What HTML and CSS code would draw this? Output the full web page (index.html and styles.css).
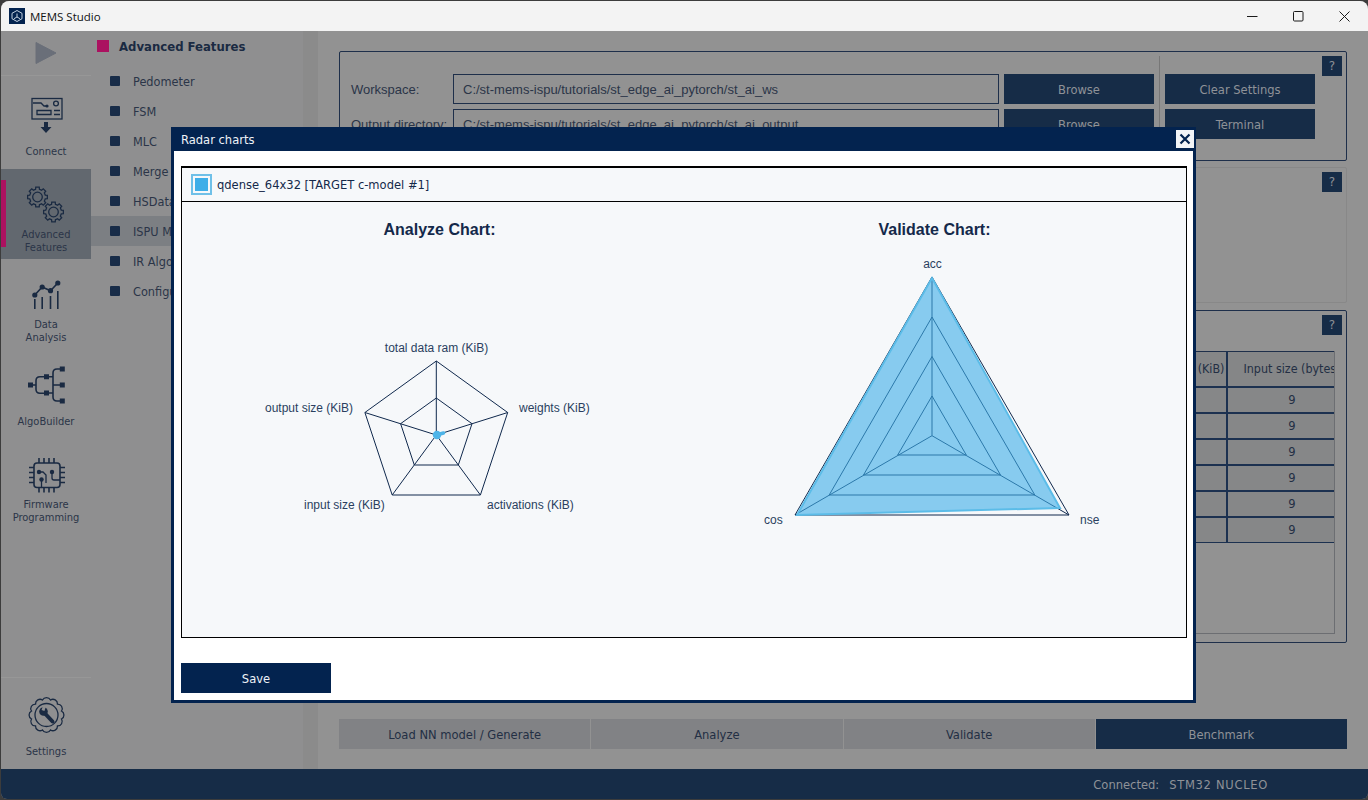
FILE: index.html
```html
<!DOCTYPE html>
<html lang="en">
<head>
  <meta charset="UTF-8">
  <title>MEMS Studio</title>
  <link rel="stylesheet" href="styles.css">
</head>
<body>
  <svg class="defs" width="0" height="0">
    <defs>
      <polygon id="cog" points="-1.94,-7.76 -1.74,-9.85 1.74,-9.85 1.94,-7.76 4.11,-6.86 5.73,-8.19 8.19,-5.73 6.86,-4.11 7.76,-1.94 9.85,-1.74 9.85,1.74 7.76,1.94 6.86,4.11 8.19,5.73 5.73,8.19 4.11,6.86 1.94,7.76 1.74,9.85 -1.74,9.85 -1.94,7.76 -4.11,6.86 -5.73,8.19 -8.19,5.73 -6.86,4.11 -7.76,1.94 -9.85,1.74 -9.85,-1.74 -7.76,-1.94 -6.86,-4.11 -8.19,-5.73 -5.73,-8.19 -4.11,-6.86"/>
    </defs>
  </svg>

  <div class="window">
    <!-- Title bar -->
    <div class="titlebar">
      <svg class="app-icon" viewBox="0 0 16 16" width="16" height="16">
        <rect width="16" height="16" fill="#03234f"/>
        <path d="M8 2.500l5 2.800v5.400l-5 2.800-5-2.800V5.300z M8 5.500v3.500l-3 1.700 M8 9l3 1.700" fill="none" stroke="#d8e4f0" stroke-width="0.9"/>
      </svg>
      <span class="app-title">MEMS Studio</span>
      <div class="win-controls">
        <svg viewBox="0 0 11 11" width="11" height="11"><path d="M0 5.500h10.500" stroke="#1a1a1a" fill="none"/></svg>
        <svg viewBox="0 0 11 11" width="11" height="11"><rect x="0.500" y="0.500" width="9.500" height="9.500" rx="1" stroke="#1a1a1a" fill="none"/></svg>
        <svg viewBox="0 0 11 11" width="11" height="11"><path d="M0.500 0.500l10 10M10.500 0.500l-10 10" stroke="#1a1a1a" fill="none"/></svg>
      </div>
    </div>

    <div class="app">
      <!-- Main navigation -->
      <nav class="nav">
        <div class="nav-play">
          <svg viewBox="0 0 22 24" width="22" height="24"><path d="M1 1.500L21 12 1 22.500z" fill="#6a6f79" stroke="#6a6f79" stroke-linejoin="round"/></svg>
        </div>
        <div class="nav-item first">
          <svg class="nav-icon" viewBox="0 0 40 40">
            <rect x="6" y="3.500" width="30" height="20.500"/>
            <path d="M7 8h8l3 3h3 M11 15.500h14v4H11z M28 15.500h6 M28 19.500h6"/>
            <circle cx="30" cy="8.500" r="2.400"/>
            <circle class="solid" cx="21" cy="11" r="1.600"/>
            <path class="solid" d="M18 27h4v5h3.500L20 38l-5.500-6H18z"/>
          </svg>
          <span class="nav-label">Connect</span>
        </div>
        <div class="nav-item active">
          <span class="nav-mark"></span>
          <svg class="nav-icon" viewBox="0 0 40 40">
            <g transform="translate(11.500 12)"><use href="#cog"/><circle r="4.800"/></g>
            <g transform="translate(27.500 27)"><use href="#cog"/><circle r="4.800"/></g>
          </svg>
          <span class="nav-label">Advanced<br>Features</span>
        </div>
        <div class="nav-item">
          <svg class="nav-icon" viewBox="0 0 40 40">
            <path class="thick" d="M8.800 34V24 M16.200 34V22 M24.500 34V21 M31.800 34V16"/>
            <path class="thick" d="M8.800 20l7.400-8 8.300 3.700L31.800 8"/>
            <circle class="solid" cx="8.800" cy="20" r="2.600"/>
            <circle class="solid" cx="16.200" cy="12" r="2.600"/>
            <circle class="solid" cx="24.500" cy="15.700" r="2.600"/>
            <circle class="solid" cx="31.800" cy="8" r="2.600"/>
          </svg>
          <span class="nav-label">Data<br>Analysis</span>
        </div>
        <div class="nav-item">
          <svg class="nav-icon" viewBox="0 0 40 40">
            <path class="thick" d="M5 20h5 M20.500 11.700H14q-4 0-4 4v8.600q0 4 4 4h6.500 M20.500 11.700h6.500 M20.500 28h6.500 M36 4h-5q-4 0-4 4v24q0 4 4 4h5 M27 20h9"/>
            <path class="solid" d="M2 17.500h5v5H2z M18 9.200h5v5h-5z M18 25.500h5v5h-5z M33.800 1.500h5v5h-5z M33.800 17.500h5v5h-5z M33.800 33.500h5v5h-5z"/>
          </svg>
          <span class="nav-label">AlgoBuilder</span>
        </div>
        <div class="nav-item">
          <svg class="nav-icon" viewBox="0 0 40 40">
            <rect class="thick" x="8" y="8" width="26" height="24.500" rx="3"/>
            <path class="thick" d="M13 3v5 M18 3v5 M23 3v5 M28 3v5 M13 32.500v5 M18 32.500v5 M23 32.500v5 M28 32.500v5 M3 12.500h5 M3 17.500h5 M3 22.500h5 M3 27.500h5 M34 12.500h5 M34 17.500h5 M34 22.500h5 M34 27.500h5"/>
            <path d="M13 17h4l3 3v8 M26 17v6q0 2 2 2h6 M15.500 24.500v8"/>
            <circle class="solid" cx="13" cy="17" r="2.200"/>
            <circle class="solid" cx="26" cy="17" r="2.200"/>
            <circle class="solid" cx="15.500" cy="24.500" r="2.200"/>
          </svg>
          <span class="nav-label">Firmware<br>Programming</span>
        </div>
        <div class="nav-item settings">
          <svg class="nav-icon" viewBox="0 0 40 40">
            <g transform="translate(20.500 20)">
              <path d="M-4.010-14.970A4.500 4.500 0 0 1 4.010-14.970A4.500 4.500 0 0 1 10.960-10.960A4.500 4.500 0 0 1 14.970-4.010A4.500 4.500 0 0 1 14.970 4.010A4.500 4.500 0 0 1 10.960 10.960A4.500 4.500 0 0 1 4.010 14.970A4.500 4.500 0 0 1-4.010 14.970A4.500 4.500 0 0 1-10.960 10.960A4.500 4.500 0 0 1-14.970 4.010A4.500 4.500 0 0 1-14.970-4.010A4.500 4.500 0 0 1-10.960-10.960A4.500 4.500 0 0 1-4.010-14.970z"/>
              <circle r="11.500"/>
              <path class="wrench" d="M-2 -2L6 6.500"/>
              <circle class="solid" cx="-3" cy="-3.500" r="4.300"/>
              <path class="notch" d="M-3.500 -4.500L-2 -9"/>
            </g>
          </svg>
          <span class="nav-label">Settings</span>
        </div>
      </nav>

      <!-- Sub menu -->
      <aside class="submenu">
        <h2 class="submenu-title"><span class="title-mark"></span>Advanced Features</h2>
        <ul class="submenu-list">
          <li><span class="dot"></span>Pedometer</li>
          <li><span class="dot"></span>FSM</li>
          <li><span class="dot"></span>MLC</li>
          <li><span class="dot"></span>Merge Projects</li>
          <li><span class="dot"></span>HSDatalog</li>
          <li class="selected"><span class="dot"></span>ISPU Model Zoo</li>
          <li><span class="dot"></span>IR Algorithms</li>
          <li><span class="dot"></span>Configuration</li>
        </ul>
      </aside>
      <div class="strip"></div>

      <!-- Main content -->
      <main class="main">
        <section class="panel panel-paths">
          <a class="help">?</a>
          <div class="paths">
            <div class="path-row">
              <label>Workspace:</label>
              <div class="path-input">C:/st-mems-ispu/tutorials/st_edge_ai_pytorch/st_ai_ws</div>
              <button class="btn">Browse</button>
            </div>
            <div class="path-row">
              <label>Output directory:</label>
              <div class="path-input">C:/st-mems-ispu/tutorials/st_edge_ai_pytorch/st_ai_output</div>
              <button class="btn">Browse</button>
            </div>
          </div>
          <div class="actions">
            <button class="btn">Clear Settings</button>
            <button class="btn">Terminal</button>
          </div>
        </section>

        <section class="panel panel-empty">
          <a class="help">?</a>
        </section>

        <section class="panel panel-table">
          <a class="help">?</a>
          <div class="table-wrap">
            <table class="results">
              <colgroup>
                <col class="c-name"><col class="c-mid"><col class="c-mid"><col class="c-act"><col class="c-input">
              </colgroup>
              <thead>
                <tr><th>Model</th><th>Flash (KiB)</th><th>RAM (KiB)</th><th>Activations (KiB)</th><th>Input size (bytes)</th></tr>
              </thead>
              <tbody>
                <tr><td>qdense_64x32</td><td>4</td><td>1</td><td>1</td><td>9</td></tr>
                <tr><td>qdense_64x32</td><td>4</td><td>1</td><td>1</td><td>9</td></tr>
                <tr><td>qdense_64x32</td><td>4</td><td>1</td><td>1</td><td>9</td></tr>
                <tr><td>qdense_64x32</td><td>4</td><td>1</td><td>1</td><td>9</td></tr>
                <tr><td>qdense_64x32</td><td>4</td><td>1</td><td>1</td><td>9</td></tr>
                <tr><td>qdense_64x32</td><td>4</td><td>1</td><td>1</td><td>9</td></tr>
              </tbody>
            </table>
          </div>
        </section>

        <div class="tabs">
          <div class="tab">Load NN model / Generate</div>
          <div class="tab">Analyze</div>
          <div class="tab">Validate</div>
          <div class="tab tab-active">Benchmark</div>
        </div>
      </main>
    </div>

    <footer class="statusbar">
      <span>Connected:</span><span class="status-device">STM32 NUCLEO</span>
    </footer>
  </div>

  <!-- Radar charts dialog -->
  <div class="modal">
    <div class="modal-header">
      <span>Radar charts</span>
      <button class="modal-close">
        <svg viewBox="0 0 12 12" width="12" height="12"><path d="M1.500 1.500l9 9M10.500 1.500l-9 9" stroke="#03234f" stroke-width="2.200" fill="none"/></svg>
      </button>
    </div>
    <div class="modal-body">
      <div class="chart-box">
        <div class="chart-legend">
          <span class="check"></span>qdense_64x32 [TARGET c-model #1]
        </div>
        <div class="charts">
          <div class="chart">
            <h3>Analyze Chart:</h3>
            <svg class="radar" viewBox="192 240 495 395" width="495" height="395">
              <path class="grid" d="M436.300 361L507.700 412.500 480.400 495H392.200L364.900 412.500z"/>
              <path class="grid" d="M436.300 398L472 423.700 458.300 465H414.300L400.600 423.700z"/>
              <path class="grid" d="M436.300 435V361 M436.300 435L507.700 412.500 M436.300 435L480.400 495 M436.300 435L392.200 495 M436.300 435L364.900 412.500"/>
              <circle class="blob" cx="437" cy="435" r="4.200"/>
              <path class="blob-arm" d="M438 434.500L443.500 433"/>
              <text x="436.500" y="352" text-anchor="middle">total data ram (KiB)</text>
              <text x="519" y="412">weights (KiB)</text>
              <text x="265" y="412">output size (KiB)</text>
              <text x="304" y="509">input size (KiB)</text>
              <text x="487" y="509">activations (KiB)</text>
            </svg>
          </div>
          <div class="chart">
            <h3>Validate Chart:</h3>
            <svg class="radar" viewBox="687 240 495 395" width="495" height="395">
              <path class="grid" d="M932 277L1069 515H795z"/>
              <path class="grid" d="M932 317L1034.800 495H829.200z"/>
              <path class="grid" d="M932 356.500L1000.500 475H863.500z"/>
              <path class="grid" d="M932 396L966.300 455H897.700z"/>
              <path class="grid" d="M932 435.700V277 M932 435.700L1069 515 M932 435.700L795 515"/>
              <path class="area" d="M932 278L1060 508 797 515z"/>
              <text x="932.500" y="268" text-anchor="middle">acc</text>
              <text x="764" y="524">cos</text>
              <text x="1080" y="524">nse</text>
            </svg>
          </div>
        </div>
      </div>
      <button class="btn-save">Save</button>
    </div>
  </div>
</body>
</html>
```

FILE: styles.css
```css
* {
  box-sizing: border-box;
}
body {
  margin: 0;
  width: 1368px;
  height: 800px;
  position: relative;
  overflow: hidden;
  background-color: #3c3c3c;
  font-family: 'DejaVu Sans', sans-serif;
  font-stretch: condensed;
  font-size: 12.8px;
  color: #232f44;
}
.defs {
  position: absolute;
}
.window {
  margin: 1px 0 0 1px;
  height: 798px;
  display: flex;
  flex-direction: column;
  border-radius: 8px 8px 6px 6px;
  overflow: hidden;
  background-color: #929292;
}

/* Title bar */
.titlebar {
  height: 30px;
  flex: none;
  display: flex;
  align-items: center;
  padding-left: 8px;
  background-color: #f3f3f3;
  color: #111;
}
.app-icon {
  margin-right: 5px;
}
.app-title {
  font-family: 'Open Sans', sans-serif;
  font-stretch: normal;
  font-size: 11.5px;
}
.win-controls {
  margin-left: auto;
  display: flex;
  gap: 35px;
  padding-right: 18px;
}

.app {
  flex: 1;
  display: flex;
  min-height: 0;
}

/* Navigation */
.nav {
  width: 90px;
  flex: none;
  display: flex;
  flex-direction: column;
  background-color: #8f8f90;
}
.nav-play {
  height: 45px;
  flex: none;
  display: flex;
  align-items: center;
  justify-content: center;
  padding-right: 1px;
  border-bottom: 1px solid #979797;
}
.nav-item {
  height: 90px;
  flex: none;
  position: relative;
  display: flex;
  flex-direction: column;
  align-items: center;
  padding-top: 16px;
}
.nav-item.first {
  margin-top: 3px;
}
.nav-item.active {
  background-color: #62686f;
}
.nav-item.settings {
  margin-top: auto;
}
.nav-item.settings::before {
  content: "";
  position: absolute;
  left: 0;
  right: 0;
  top: -2px;
  border-top: 1px solid #979797;
}
.nav-mark {
  position: absolute;
  left: 0;
  top: 11px;
  width: 5px;
  height: 67px;
  background-color: #ab1160;
}
.nav-icon {
  width: 40px;
  height: 40px;
  fill: none;
  stroke: #1a2a42;
  stroke-width: 1.3;
}
.nav-icon .thick {
  stroke-width: 1.6;
  fill: none;
}
.nav-icon .solid {
  fill: #1a2a42;
  stroke: none;
}
.nav-icon .wrench {
  stroke-width: 4;
  stroke-linecap: round;
}
.nav-icon .notch {
  stroke: #8f8f90;
  stroke-width: 3;
}
.nav-label {
  height: 26px;
  margin-top: 3px;
  display: flex;
  align-items: center;
  text-align: center;
  line-height: 13px;
  font-size: 11px;
  color: #2b3548;
}

/* Sub menu */
.submenu {
  width: 212px;
  flex: none;
  background-color: #8f8f90;
}
.submenu-title {
  margin: 0;
  height: 30px;
  padding: 0 0 0 6px;
  display: flex;
  align-items: center;
  gap: 10px;
  font-size: 13px;
  font-weight: bold;
  color: #1a2a42;
}
.title-mark {
  width: 12px;
  height: 12px;
  background-color: #ab1160;
}
.submenu-list {
  list-style: none;
  margin: 5px 0 0;
  padding: 0;
}
.submenu-list li {
  height: 30px;
  display: flex;
  align-items: center;
  gap: 13px;
  padding: 1px 0 0 19px;
  font-size: 12.6px;
  color: #2b3548;
  white-space: nowrap;
}
.submenu-list li.selected {
  background-color: #7c7f83;
}
.dot {
  width: 10px;
  height: 10px;
  margin-top: -1px;
  border-radius: 1px;
  background-color: #182c48;
}
.strip {
  width: 15px;
  flex: none;
  background-color: #8b8b8b;
}

/* Main content */
.main {
  flex: 1;
  display: flex;
  flex-direction: column;
  padding: 20px 21px 20px;
  min-width: 0;
  font-family: 'Liberation Sans', sans-serif;
  font-stretch: normal;
}
.panel {
  position: relative;
  border: 1px solid #1e2f4a;
  border-radius: 2px;
}
.help {
  position: absolute;
  top: 4px;
  right: 4px;
  width: 20px;
  height: 20px;
  display: flex;
  align-items: center;
  justify-content: center;
  background-color: #162c47;
  color: #8d9096;
  font-family: 'DejaVu Sans', sans-serif;
  font-size: 12px;
}
.panel-paths {
  height: 110px;
  display: flex;
  padding: 4px 0 0 11px;
}
.paths {
  padding-top: 18px;
  display: flex;
  flex-direction: column;
  gap: 5px;
}
.path-row {
  display: flex;
  align-items: center;
}
.path-row label {
  width: 102px;
  flex: none;
  font-size: 13px;
  color: #2b3548;
}
.path-input {
  width: 546px;
  height: 30px;
  margin-right: 5px;
  padding: 1px 0 0 9px;
  display: flex;
  align-items: center;
  border: 1px solid #1e2f4a;
  font-size: 13px;
  color: #2b3548;
}
.btn {
  width: 150px;
  height: 30px;
  padding: 1px 0 0;
  border: none;
  background-color: #162c47;
  color: #8f9298;
  font-family: 'DejaVu Sans', sans-serif;
  font-stretch: condensed;
  font-size: 12.8px;
}
.actions {
  margin-left: 5px;
  margin-bottom: 20px;
  padding: 18px 0 0 5px;
  display: flex;
  flex-direction: column;
  gap: 5px;
  border-left: 1px solid #777;
}
.panel-empty {
  height: 136px;
  margin-top: 6px;
  border-color: #888;
}
.panel-table {
  height: 333px;
  margin-top: 7px;
  padding: 40px 11px 9px 11px;
}
.table-wrap {
  height: 283px;
  overflow: hidden;
  border: 1px solid #6c6e72;
  border-top: none;
}
.results {
  width: 1005px;
  table-layout: fixed;
  border-collapse: collapse;
  font-family: 'DejaVu Sans', sans-serif;
  font-stretch: condensed;
  font-size: 12.8px;
  color: #232f44;
}
.c-name { width: 300px; }
.c-mid { width: 239px; }
.c-act { width: 97px; }
.c-input { width: 130px; }
.results th {
  height: 35px;
  padding: 0;
  font-size: 12.4px;
  font-weight: normal;
  white-space: nowrap;
  overflow: hidden;
  background-color: #858687;
  border-top: 1px solid #1e2f4a;
  border-bottom: 2px solid #1c3150;
  border-right: 2px solid #1c3150;
}
.results td {
  height: 26px;
  padding: 0;
  text-align: center;
  background-color: #868788;
  border-bottom: 2px solid #1c3150;
  border-right: 2px solid #1c3150;
}
.results tr:last-child td {
  border-bottom-width: 1px;
}
.tabs {
  margin-top: auto;
  display: grid;
  grid-template-columns: repeat(4, 1fr);
  gap: 1px;
  font-family: 'DejaVu Sans', sans-serif;
  font-stretch: condensed;
}
.tab {
  height: 30px;
  padding-top: 1px;
  display: flex;
  align-items: center;
  justify-content: center;
  background-color: #818285;
  color: #232f44;
}
.tab-active {
  background-color: #162c47;
  color: #8f9298;
}

/* Status bar */
.statusbar {
  height: 30px;
  flex: none;
  display: flex;
  align-items: center;
  justify-content: flex-end;
  gap: 10px;
  padding: 1px 100px 0 0;
  background-color: #162c47;
  color: #8f9298;
}
.status-device {
  letter-spacing: 0.7px;
}

/* Dialog */
.modal {
  position: absolute;
  left: 171px;
  top: 127px;
  width: 1025px;
  height: 576px;
  display: flex;
  flex-direction: column;
  border: 3px solid #03234f;
  border-top: none;
  background-color: #fff;
}
.modal-header {
  height: 24px;
  flex: none;
  margin: 0 -3px;
  padding-left: 10px;
  display: flex;
  align-items: center;
  background-color: #03234f;
  color: #eef2f7;
}
.modal-close {
  margin-left: auto;
  margin-right: 2px;
  width: 18px;
  height: 18px;
  padding: 0;
  border: none;
  display: flex;
  align-items: center;
  justify-content: center;
  background-color: #f2f4f7;
}
.modal-body {
  flex: 1;
  padding: 15px 6px 7px 7px;
  display: flex;
  flex-direction: column;
}
.chart-box {
  height: 472px;
  border: 1px solid #000;
  border-top-width: 2px;
  background-color: #f6f8fa;
}
.chart-legend {
  height: 34px;
  display: flex;
  align-items: center;
  padding-left: 9px;
  gap: 5px;
  border-bottom: 1px solid #000;
  color: #14294a;
}
.check {
  width: 21px;
  height: 21px;
  border: 2px solid #6fc0e8;
  outline: none;
  padding: 2px;
  background-color: #3eaee8;
  background-clip: content-box;
}
.charts {
  display: grid;
  grid-template-columns: 495px 495px;
  padding-left: 10px;
}
.chart h3 {
  margin: 18px 0 0;
  height: 20px;
  line-height: 20px;
  text-align: center;
  font-family: 'Liberation Sans', sans-serif;
  font-stretch: normal;
  font-size: 16px;
  font-weight: bold;
  color: #14294a;
}
.radar {
  display: block;
}
.radar text {
  font-family: 'Liberation Sans', sans-serif;
  font-stretch: normal;
  font-size: 12px;
  fill: #2a3f5f;
}
.radar .grid {
  fill: none;
  stroke: #10294d;
  stroke-width: 1;
}
.radar .area {
  fill: rgba(62, 174, 232, 0.6);
  stroke: #5bbce8;
  stroke-width: 2;
}
.radar .blob {
  fill: #4db4e8;
}
.radar .blob-arm {
  fill: none;
  stroke: #4db4e8;
  stroke-width: 3.5;
  stroke-linecap: round;
}
.btn-save {
  margin-top: 25px;
  width: 150px;
  height: 30px;
  padding: 1px 0 0;
  border: none;
  background-color: #03234f;
  color: #eef2f7;
  font-family: 'DejaVu Sans', sans-serif;
  font-stretch: condensed;
  font-size: 12.8px;
}
```
